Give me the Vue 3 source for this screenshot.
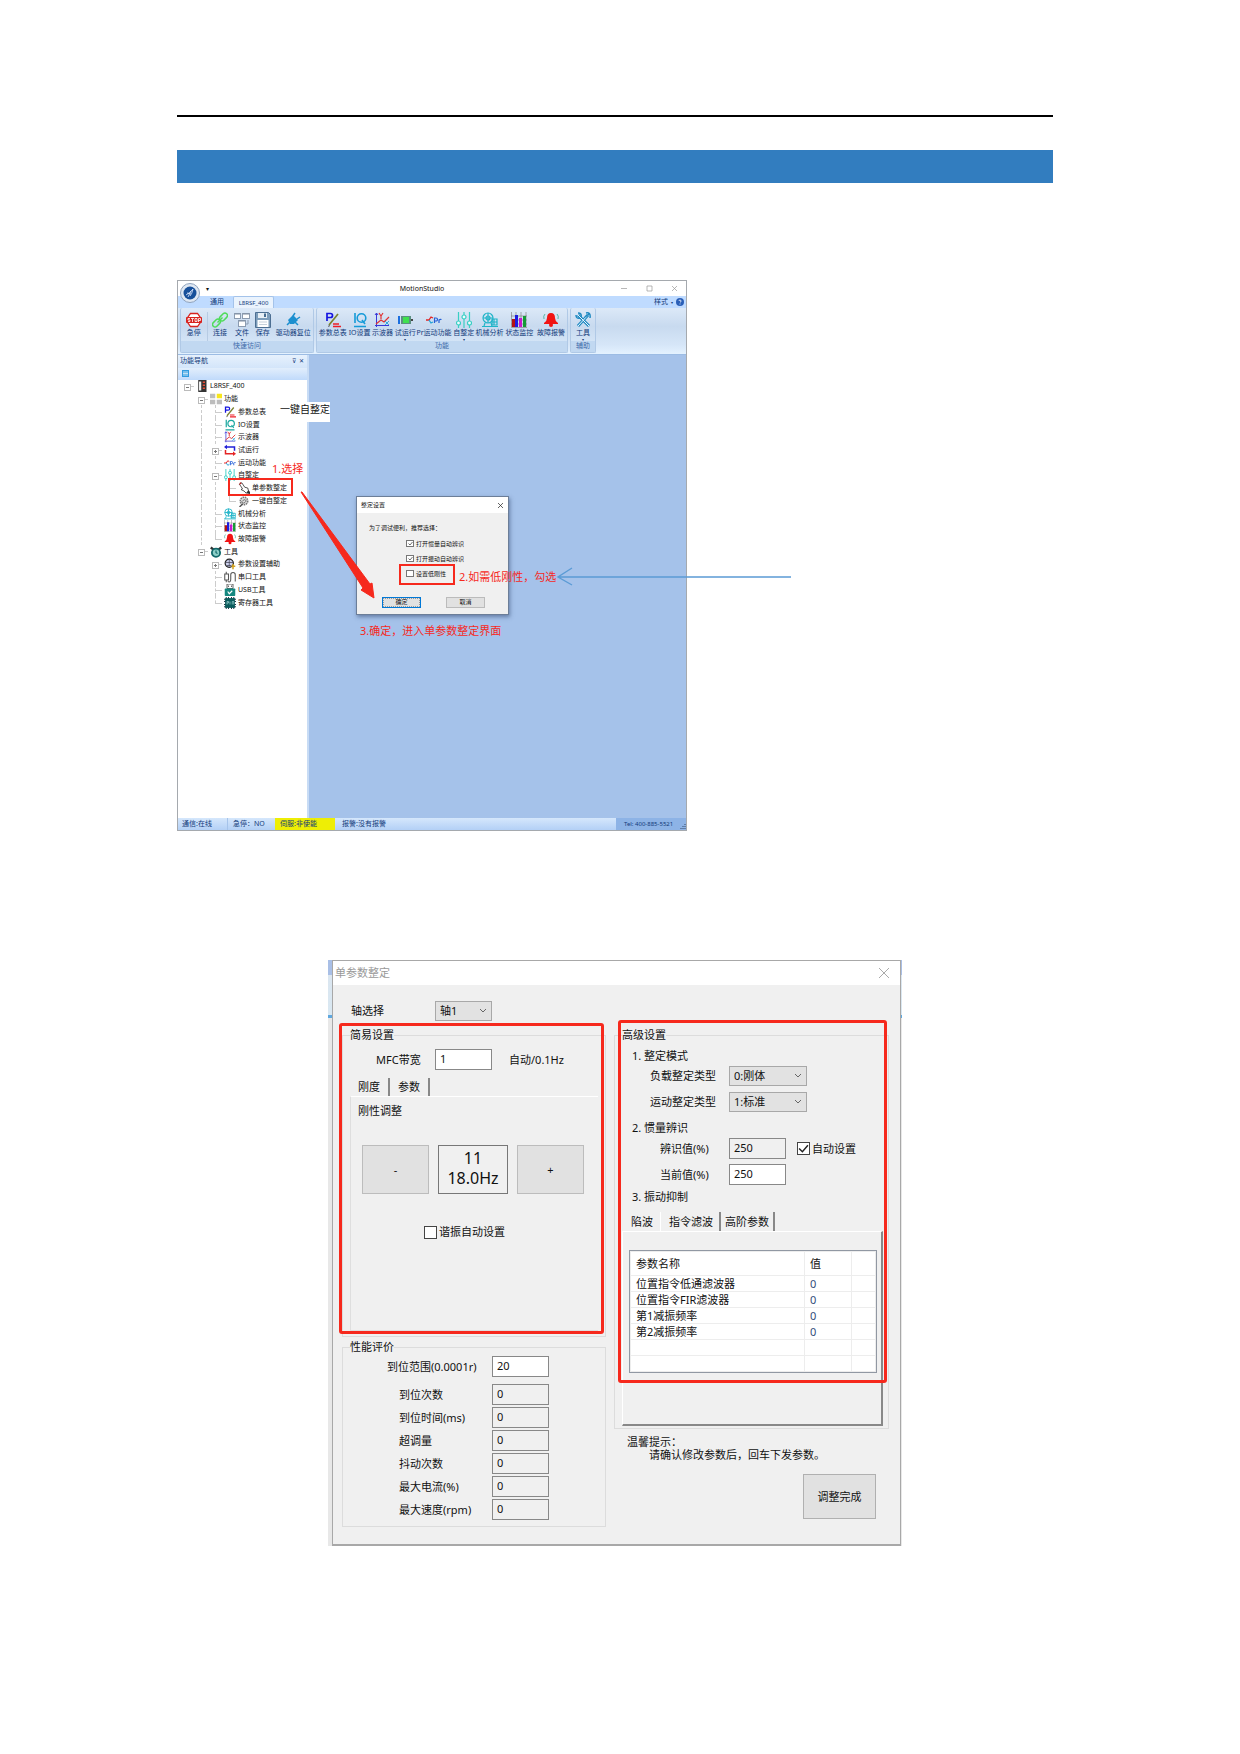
<template>
  <main class="page">
    <!-- Iconos compartidos por la cinta y el árbol -->
    <svg class="sprite" aria-hidden="true">
      <symbol id="stop" viewBox="0 0 16 16">
        <path d="M4.500 1.500h7l3.500 5v3l-3.500 5h-7l-3.500-5v-3z" fill="#fff" stroke="#d8231f" stroke-width="1.300" />
        <rect x="0" y="5" width="16" height="6" rx="1" fill="#d8231f" />
        <path d="M4 6.500H2v1.500h2v1.500H2M5 6.500h3M6.500 6.500v3.500M9 6.500h2v3H9zM12.500 10V6.500h2v2h-2" fill="none" stroke="#fff" stroke-width=".8" />
      </symbol>
      <symbol id="link" viewBox="0 0 16 16">
        <g fill="none" stroke="#4fdc5a" stroke-width="1.500">
          <rect x="7" y="2.500" width="9" height="5" rx="2.500" transform="rotate(-45 11.500 5)" />
          <rect x="0" y="8.500" width="9" height="5" rx="2.500" transform="rotate(-45 4.500 11)" />
          <path d="M5.500 10.500l5-5" />
        </g>
      </symbol>
      <symbol id="files" viewBox="0 0 16 16">
        <g fill="#fff" stroke="#8b9bb0">
          <rect x=".5" y="1.500" width="6" height="5" /><rect x="8.500" y="1.500" width="7" height="5" />
          <rect x="4.500" y="8.500" width="7" height="6" />
        </g>
        <path d="M1 2h5M9 2h6M5 9h6" stroke="#7f8da1" />
        <path d="M12 12h2V8" fill="none" stroke="#8b9bb0" />
      </symbol>
      <symbol id="save" viewBox="0 0 16 16">
        <path d="M.5.5h13l2 2v13H.500z" fill="#7d9dbb" stroke="#4d6f92" />
        <rect x="3" y="1" width="9" height="5" fill="#e6eef5" /><rect x="9" y="1.500" width="2" height="3.500" fill="#456b90" />
        <rect x="2.500" y="8" width="11" height="7" fill="#fff" />
        <path d="M4 10h8M4 12.500h8" stroke="#c5d0db" />
      </symbol>
      <symbol id="plug" viewBox="0 0 16 16">
        <path d="M3 8l5-5 5 5-4 4-4 0z" fill="#1c8fcf" />
        <path d="M8 4l2-3M12 7l3-2M5 10l-3 3M10 10l3 3" stroke="#1c8fcf" stroke-width="1.500" />
      </symbol>
      <symbol id="params" viewBox="0 0 16 16">
        <path d="M2 9V1.500h3.500a2 2 0 010 4H2" fill="none" stroke="#1515e0" stroke-width="1.700" />
        <path d="M13 2L4 13" stroke="#7c8230" stroke-width="1.700" /><path d="M4 13l-1 2 2-1z" fill="#333" />
        <path d="M8 12h6M8 14.500h8" stroke="#ee1c25" stroke-width="1.400" />
      </symbol>
      <symbol id="io" viewBox="0 0 16 16">
        <path d="M3 1v10M2 14.500h12" stroke="currentColor" stroke-width="1.600" />
        <circle cx="9.500" cy="6" r="4.300" fill="none" stroke="currentColor" stroke-width="1.600" />
        <path d="M10 8l3 4" stroke="currentColor" stroke-width="1.500" />
      </symbol>
      <symbol id="scope" viewBox="0 0 16 16">
        <path d="M2.500 15V1M1 3l1.500-2L4 3M1 13.500h14" fill="none" stroke="#3939d8" />
        <path d="M5 1l2 3 2-3M7 4v3M2 12l5-4 3 2 5-5" fill="none" stroke="#e03232" stroke-width="1.200" />
        <path d="M11 9l4 4M15 9l-4 4" stroke="#31a8de" />
      </symbol>
      <symbol id="motor" viewBox="0 0 16 16">
        <path d="M2 4v8" stroke="#1b6fe0" stroke-width="2" /><path d="M14 8h2" stroke="#444" stroke-width="2" />
        <rect x="4" y="4" width="10" height="8" fill="#5b8f80" /><path d="M6 5h6v6H6z" fill="#3fe04f" />
      </symbol>
      <symbol id="loop" viewBox="0 0 16 16">
        <path d="M14 9V4H3" fill="none" stroke="#2020d8" stroke-width="2" /><path d="M4 1v6L0 4z" fill="#2020d8" />
        <path d="M2 8v5h11" fill="none" stroke="#e42424" stroke-width="2" /><path d="M12 10v6l4-3z" fill="#e42424" />
      </symbol>
      <symbol id="pr" viewBox="0 0 16 16">
        <path d="M0 8h3l2-3 2 1" fill="none" stroke="#e42424" stroke-width="1.300" /><path d="M3 8l2 3 2-1" fill="none" stroke="#28a5d8" stroke-width="1.300" />
        <path d="M8.500 11V6h1.500a1.400 1.400 0 010 3H8.500M13 11V8q1-1 2.500-.5" fill="none" stroke="#2560d8" stroke-width="1.200" />
      </symbol>
      <symbol id="sliders" viewBox="0 0 16 16">
        <path d="M2.500 0v16M8 0v16M13.500 0v16" stroke="#39cfc4" stroke-width="1.200" />
        <g fill="#eefcff" stroke="#39cfc4" stroke-width="1.200"><circle cx="2.500" cy="11" r="2" /><circle cx="8" cy="5" r="2" /><circle cx="13.500" cy="11" r="2" /></g>
      </symbol>
      <symbol id="machine" viewBox="0 0 16 16">
        <g fill="none" stroke="#20b4c8" stroke-width="1.200">
          <circle cx="6" cy="6" r="5" /><circle cx="6" cy="6" r="2" /><path d="M6 1v10M1 6h10M3 11l-1 3M9 11l1 3M0 14.500h16" />
          <path d="M10 7h5v6h-5zM12 7v6M10 10h5" />
        </g>
      </symbol>
      <symbol id="bars" viewBox="0 0 16 16">
        <path d="M.5 0v15.500H16M0 4h16M0 8h16M0 12h16M5 0v15M10 0v15M15 0v15" fill="none" stroke="#777" stroke-width=".6" />
        <rect x="1" y="7" width="3" height="8" fill="#b31212" /><rect x="4" y="3" width="3" height="12" fill="#1c1ce0" />
        <rect x="8" y="6" width="3" height="9" fill="#ca15ce" /><rect x="12" y="4" width="3" height="11" fill="#149b36" />
      </symbol>
      <symbol id="bell" viewBox="0 0 16 16">
        <path d="M8 1q4 0 4 5 0 3 3 5v1H1v-1q3-2 3-5 0-5 4-5z" fill="#f11313" /><circle cx="8" cy="13" r="2" fill="#f11313" />
        <path d="M2 2Q0 4 1 7M14 2q2 2 1 5" fill="none" stroke="#56b5a5" />
      </symbol>
      <symbol id="tools" viewBox="0 0 16 16">
        <path d="M3 3l11 11M13 3L3 14" stroke="#208ac2" stroke-width="3" /><path d="M3 3l11 11M13 3L3 14" stroke="#e7f5ff" />
        <path d="M1 3q0 4 4 3M3 1q4 0 3 4M11 1q5-1 4 5M10 5l4-3" fill="none" stroke="#208ac2" stroke-width="1.500" />
      </symbol>
      <symbol id="drive" viewBox="0 0 16 16">
        <path d="M3 0h11v16H3z" fill="#333" /><path d="M4 2h3v12H4z" fill="#eee" /><path d="M9 3h3M9 7h3M9 11h3" stroke="#e94b35" stroke-width="2" />
      </symbol>
      <symbol id="blocks" viewBox="0 0 16 16">
        <path d="M0 1h7v6H0zM0 9h7v6H0zM9 9h7v6H9z" fill="#bdbdbd" /><path d="M9 1h7v6H9z" fill="#f8e61c" />
      </symbol>
      <symbol id="hand" viewBox="0 0 16 16">
        <path d="M2 3l3-2 4 6 4 1 1 4-3 3-3-3-4-2 2-1z" fill="#fff" stroke="#222" /><path d="M11 15l3-4 2 2v3z" fill="#333" /><path d="M1 4l2-4 2 2z" fill="#b32626" />
      </symbol>
      <symbol id="gear" viewBox="0 0 16 16">
        <circle cx="8" cy="8" r="5" fill="#ddd" stroke="#777" stroke-width="2" stroke-dasharray="2 1" /><path d="M5 9q4-5 6-1-4 5-6 1z" fill="none" stroke="#555" /><path d="M2 16l4-4" stroke="#555" stroke-width="2" />
      </symbol>
      <symbol id="clock" viewBox="0 0 16 16">
        <path d="M1 2l4 3M15 2l-4 3" stroke="#333" stroke-width="3" /><circle cx="8" cy="9" r="5.500" fill="#8ccfc8" stroke="#12696b" stroke-width="2.400" /><path d="M8 6v3l2 1" fill="none" stroke="#12696b" stroke-width="1.500" />
      </symbol>
      <symbol id="wizard" viewBox="0 0 16 16">
        <circle cx="7" cy="7" r="5.500" fill="#cdd2ee" stroke="#222" stroke-width="1.600" /><path d="M2 6h10M4 10h6M7 2v9" stroke="#445" /><path d="M12 8v7M10 11h5" stroke="#d4a11c" stroke-width="2" />
      </symbol>
      <symbol id="serial" viewBox="0 0 16 16">
        <path d="M1 4h5v8H1zM3 1v3M3 12v3M5 14q4 2 4-3V5q0-3 3-3t3 3v9" fill="none" stroke="#555" stroke-width="1.400" />
      </symbol>
      <symbol id="usb" viewBox="0 0 16 16">
        <path d="M4 0h8v6H4z" fill="#fff" stroke="#333" /><path d="M6 2v2M10 2v2" stroke="#333" /><rect x="1" y="6" width="14" height="10" rx="1" fill="#14877f" /><path d="M5 10l2 3 4-4" fill="none" stroke="#fff" stroke-width="1.500" />
      </symbol>
      <symbol id="chip" viewBox="0 0 16 16">
        <path d="M3 0v16M6 0v16M10 0v16M13 0v16M0 3h16M0 6h16M0 10h16M0 13h16" stroke="#123" stroke-width="1.200" /><rect x="1.500" y="1.500" width="13" height="13" fill="#0b5c5c" /><path d="M4 10V6h2v2H4M8 10V6M11 10V6h2v4" fill="none" stroke="#9cc" />
      </symbol>
    </svg>

    <hr class="rule" />
    <div class="band"></div>

    <section class="studio">
      <header class="title-bar">
        <span class="quick">▾</span>
        <span class="title">MotionStudio</span>
        <span class="win-buttons">
          <button aria-label="最小化"><svg viewBox="0 0 7 7"><path d="M0 3.500h6" /></svg></button>
          <button aria-label="最大化"><svg viewBox="0 0 7 7"><path d="M1 1h5v5H1z" /></svg></button>
          <button aria-label="关闭"><svg viewBox="0 0 7 7"><path d="M1 1l5 5M6 1L1 6" /></svg></button>
        </span>
      </header>
      <svg class="orb" viewBox="0 0 20 20">
        <circle cx="10" cy="10" r="9.500" fill="#dfe8f3" stroke="#8fa3bd" />
        <circle cx="10" cy="10" r="6.500" fill="#17509a" />
        <path d="M6 12q4-2 7-6-1 5-3 7M8 14l3-6M7 10l4 1" fill="none" stroke="#dfeaff" stroke-width=".8" />
      </svg>
      <nav class="ribbon-tabs">
        <button>通用</button>
        <button class="active">L8RSF_400</button>
        <span class="style-menu">样式 <i>▾</i><svg viewBox="0 0 8 8"><circle cx="4" cy="4" r="4" fill="#2a5fb8" /><path d="M3 3q0-1 1-1t1 1-1 1.500M4 5.500v1" fill="none" stroke="#fff" stroke-width=".8" /></svg></span>
      </nav>
      <div class="ribbon">
        <div v-for="g in groups" :key="g.name" class="group" :class="g.kind">
          <div class="tools-row">
            <button v-for="t in g.tools" :key="t.label">
              <svg><use :href="'#' + t.icon" /></svg>
              <span>{{ t.label }}</span>
              <i v-if="t.menu">▾</i>
            </button>
          </div>
          <div class="caption">{{ g.name }}</div>
        </div>
      </div>
      <div class="studio-body">
        <aside>
          <div class="side-head"><span>功能导航</span><span class="pins"><span>⊽</span><span>✕</span></span></div>
          <div class="side-tools"><svg viewBox="0 0 7 7"><path d="M0 0h7v7H0z" fill="#2f9be0" /><path d="M1 2h5M1 3.500h5M1 5h5" stroke="#fff" stroke-width=".7" /></svg></div>
          <ul class="tree">
            <li v-for="n in nodes" :key="n.label">
              <span v-for="(c, i) in n.guides" :key="i" class="guide" :class="guideClass[c]"></span>
              <svg><use :href="'#' + n.icon" /></svg>
              <span>{{ n.label }}</span>
            </li>
          </ul>
        </aside>
        <div class="workspace"></div>
      </div>
      <footer class="status">
        <span class="s1">通信:在线</span>
        <span class="s2">急停：NO</span>
        <span class="s3">伺服:非使能</span>
        <span class="s4">报警:没有报警</span>
        <span class="s5">Tel: 400-885-5521<svg viewBox="0 0 6 6"><path d="M4 0h2v1H4zM2 2h4v1H2zM0 4h6v1H0z" fill="#5f7ea8" /></svg></span>
      </footer>

      <div class="prompt">
        <header>整定设置<button aria-label="关闭"><svg viewBox="0 0 7 7"><path d="M1 1l5 5M6 1L1 6" /></svg></button></header>
        <p>为了调试便利，推荐选择：</p>
        <label v-for="o in options" :key="o.label"><input v-model="o.on" type="checkbox" />{{ o.label }}</label>
        <div class="prompt-buttons"><button class="ok">确定</button><button>取消</button></div>
      </div>

      <span class="patch">一键自整定</span>
      <span class="note n1">1.选择</span>
      <span class="note n2">2.如需低刚性，勾选</span>
      <span class="note n3">3.确定，进入单参数整定界面</span>
      <span class="mark m1"></span>
      <span class="mark m2"></span>
      <svg class="arrows" viewBox="0 0 620 340">
        <path d="M123 212l1 0 68 92 2-1 2 15-13-8 2-2z" fill="#f6291d" stroke="#f6291d" />
        <path d="M380 297h233M394 288l-14 9 14 8" fill="none" stroke="#5b9bd5" stroke-width="1.400" />
      </svg>
    </section>

    <section class="tuning-shot">
      <div class="tuning">
        <header>单参数整定<button aria-label="关闭"><svg viewBox="0 0 10 10"><path d="M0 0l10 10M10 0L0 10" /></svg></button></header>
        <div class="columns">
          <div class="left">
            <div class="axis">
              <label for="axis">轴选择</label>
              <select id="axis" v-model="axis"><option>轴1</option></select>
            </div>
            <fieldset>
              <legend>简易设置</legend>
              <div class="mfc">
                <label for="mfc">MFC带宽</label>
                <input id="mfc" v-model="mfc" />
                <span>自动/0.1Hz</span>
              </div>
              <div class="tabs"><button class="on">刚度</button><button>参数</button></div>
              <div class="stiff">
                <div>刚性调整</div>
                <div class="stepper">
                  <button @click="level--">-</button>
                  <output>{{ level }}<br />18.0Hz</output>
                  <button @click="level++">+</button>
                </div>
                <label class="check"><input v-model="autoRes" type="checkbox" />谐振自动设置</label>
              </div>
            </fieldset>
            <fieldset class="perf">
              <legend>性能评价</legend>
              <div v-for="(r, i) in results" :key="r.label" class="perf-row">
                <label :for="'r' + i">{{ r.label }}</label>
                <input :id="'r' + i" v-model="r.value" :readonly="i > 0" />
              </div>
            </fieldset>
          </div>

          <div class="right">
            <fieldset>
              <legend>高级设置</legend>
              <h3>1. 整定模式</h3>
              <div class="adv-row">
                <label for="load">负载整定类型</label>
                <select id="load"><option>0:刚体</option></select>
              </div>
              <div class="adv-row">
                <label for="motion">运动整定类型</label>
                <select id="motion"><option>1:标准</option></select>
              </div>
              <h3>2. 惯量辨识</h3>
              <div class="adv-row value">
                <label for="ident">辨识值(%)</label>
                <input id="ident" value="250" readonly />
                <label class="check"><input v-model="autoSet" type="checkbox" />自动设置</label>
              </div>
              <div class="adv-row value">
                <label for="current">当前值(%)</label>
                <input id="current" value="250" />
              </div>
              <h3>3. 振动抑制</h3>
              <div class="tabs"><button>陷波</button><button class="on">指令滤波</button><button>高阶参数</button></div>
              <div class="filter-panel">
                <table>
                  <thead><tr><th>参数名称</th><th>值</th><th></th></tr></thead>
                  <tbody>
                    <tr v-for="(f, i) in filters" :key="i"><td>{{ f }}</td><td>{{ f ? 0 : '' }}</td><td></td></tr>
                  </tbody>
                </table>
              </div>
            </fieldset>
            <p class="tip">温馨提示：<br /><span>请确认修改参数后，回车下发参数。</span></p>
            <button class="done">调整完成</button>
          </div>
        </div>
        <span class="mark big-left"></span>
        <span class="mark big-right"></span>
      </div>
    </section>
  </main>
</template>

<script setup>
import { ref } from 'vue';

const axis = ref('轴1');
const mfc = ref('1');
const level = ref(11);
const autoRes = ref(false);
const autoSet = ref(true);

const groups = [
  {
    name: '快速访问',
    kind: 'access',
    tools: [
      { label: '急停', icon: 'stop' },
      { label: '连接', icon: 'link' },
      { label: '文件', icon: 'files', menu: true },
      { label: '保存', icon: 'save' },
      { label: '驱动器复位', icon: 'plug' },
    ],
  },
  {
    name: '功能',
    kind: 'functions',
    tools: [
      { label: '参数总表', icon: 'params' },
      { label: 'IO设置', icon: 'io' },
      { label: '示波器', icon: 'scope' },
      { label: '试运行', icon: 'motor', menu: true },
      { label: 'Pr运动功能', icon: 'pr' },
      { label: '自整定', icon: 'sliders', menu: true },
      { label: '机械分析', icon: 'machine' },
      { label: '状态监控', icon: 'bars' },
      { label: '故障报警', icon: 'bell' },
    ],
  },
  { name: '辅助', kind: 'help', tools: [{ label: '工具', icon: 'tools', menu: true }] },
];

// Cada carácter es una celda de 14px a la izquierda del icono
const guideClass = { '|': 'vert', T: 'tee', L: 'end', '-': 'box', '+': 'box plus' };

const nodes = [
  { guides: '-', icon: 'drive', label: 'L8RSF_400' },
  { guides: ' -', icon: 'blocks', label: '功能' },
  { guides: ' |T', icon: 'params', label: '参数总表' },
  { guides: ' |T', icon: 'io', label: 'IO设置' },
  { guides: ' |T', icon: 'scope', label: '示波器' },
  { guides: ' |+', icon: 'loop', label: '试运行' },
  { guides: ' |T', icon: 'pr', label: '运动功能' },
  { guides: ' |-', icon: 'sliders', label: '自整定' },
  { guides: ' ||T', icon: 'hand', label: '单参数整定' },
  { guides: ' ||L', icon: 'gear', label: '一键自整定' },
  { guides: ' |T', icon: 'machine', label: '机械分析' },
  { guides: ' |T', icon: 'bars', label: '状态监控' },
  { guides: ' |L', icon: 'bell', label: '故障报警' },
  { guides: ' -', icon: 'clock', label: '工具' },
  { guides: '  +', icon: 'wizard', label: '参数设置辅助' },
  { guides: '  T', icon: 'serial', label: '串口工具' },
  { guides: '  T', icon: 'usb', label: 'USB工具' },
  { guides: '  L', icon: 'chip', label: '寄存器工具' },
];

const options = ref([
  { label: '打开惯量自动辨识', on: true },
  { label: '打开振动自动辨识', on: true },
  { label: '设置低刚性', on: false },
]);

const results = ref([
  { label: '到位范围(0.0001r)', value: '20' },
  { label: '到位次数', value: '0' },
  { label: '到位时间(ms)', value: '0' },
  { label: '超调量', value: '0' },
  { label: '抖动次数', value: '0' },
  { label: '最大电流(%)', value: '0' },
  { label: '最大速度(rpm)', value: '0' },
]);

const filters = ['位置指令低通滤波器', '位置指令FIR滤波器', '第1减振频率', '第2减振频率', '', ''];
</script>

<style>
  body {
    margin: 0;
    background: #fff;
  }
</style>

<style scoped>
  .page {
    padding: 115px 187px 160px 177px;
    font-family: "Noto Sans", "Noto Sans CJK SC", sans-serif;
    color: #111;
  }

  .page * {
    box-sizing: border-box;
  }

  button, input, select {
    font: inherit;
    color: inherit;
    margin: 0;
    padding: 0;
    border: 0;
    border-radius: 0;
    background: none;
  }

  .sprite {
    display: none;
  }

  .rule {
    margin: 0;
    border: 0;
    height: 2px;
    background: #000;
  }

  .band {
    margin-top: 33px;
    height: 33px;
    background: #327dbf;
  }

  /* Ventana MotionStudio */
  .studio {
    position: relative;
    margin-top: 97px;
    width: 510px;
    max-width: 100%;
    border: 1px solid #a5a9ae;
    font-size: 7px;
    line-height: 10px;
    white-space: nowrap;
    color: #123a7a;
  }

  .title-bar {
    display: grid;
    grid-template-columns: 1fr auto 1fr;
    align-items: center;
    height: 15px;
    color: #111;
  }

  .title {
    padding-right: 20px;
  }

  .quick {
    padding-left: 28px;
    font-size: 6px;
  }

  .win-buttons {
    display: flex;
    justify-content: flex-end;
    gap: 18px;
    padding-right: 8px;
  }

  .win-buttons button, .prompt header button {
    width: 7px;
    height: 7px;
    line-height: 0;
  }

  .win-buttons svg, .prompt header svg {
    width: 7px;
    height: 7px;
    fill: none;
    stroke: #999;
    stroke-width: 0.700;
  }

  .orb {
    position: absolute;
    left: 2px;
    top: 2px;
    width: 20px;
    height: 20px;
  }

  .ribbon-tabs {
    display: flex;
    height: 12px;
    padding-left: 23px;
    background: #bfdbff;
  }

  .ribbon-tabs button {
    width: 32px;
  }

  .ribbon-tabs .active {
    width: 41px;
    font-size: 6px;
    background: #eaf3fd;
    border: 1px solid #a4c3ea;
    border-bottom: 0;
    border-radius: 2px 2px 0 0;
  }

  .style-menu {
    display: flex;
    gap: 3px;
    align-items: center;
    margin-left: auto;
    padding-right: 2px;
  }

  .style-menu svg {
    width: 8px;
    height: 8px;
  }

  i {
    font-size: 4px;
    line-height: 5px;
    font-style: normal;
  }

  .ribbon {
    display: grid;
    grid-template-columns: 134fr 252fr 26fr 88fr;
    column-gap: 2px;
    height: 47px;
    padding: 0 0 1px 2px;
    background: linear-gradient(#dce9f8, #c8daef 40%, #d6e6f8 80%, #e4f2ff);
    border-bottom: 1px solid #9cbce4;
  }

  .group {
    display: flex;
    flex-direction: column;
    min-width: 0;
    border: 1px solid #b0c9e6;
    border-top: 0;
    border-radius: 2px;
  }

  .tools-row {
    display: grid;
    flex: 1;
    padding-top: 4px;
  }

  .access .tools-row {
    grid-template-columns: 27fr 25fr 20fr 22fr 40fr;
  }

  .functions .tools-row {
    grid-template-columns: 32fr 22fr 24fr 22fr 36fr 24fr 28fr 32fr 32fr;
  }

  .tools-row button {
    display: flex;
    flex-direction: column;
    align-items: center;
    min-width: 0;
  }

  .access button:first-child {
    border-right: 1px solid #b7cbe3;
  }

  .tools-row svg {
    width: 16px;
    height: 16px;
    color: #159ad8;
  }

  .tools-row i {
    line-height: 3px;
  }

  .caption {
    height: 11px;
    background: #c1d8f1;
    color: #3e6aaa;
    text-align: center;
  }

  .studio-body {
    display: grid;
    grid-template-columns: 131fr 377fr;
    height: 463px;
    background: #a5c2ea;
  }

  aside {
    background: #fff;
    border-right: 2px solid #c8dcf5;
  }

  .side-head {
    display: flex;
    justify-content: space-between;
    height: 13px;
    padding: 1px 3px 0 2px;
    background: linear-gradient(#e7f1fd, #d3e5fa);
  }

  .pins {
    display: flex;
    gap: 3px;
    font-size: 6px;
  }

  .side-tools {
    height: 12px;
    padding: 2px 4px;
    line-height: 0;
    background: linear-gradient(#e2eefc, #c0dafb);
  }

  .side-tools svg {
    width: 7px;
    height: 7px;
  }

  .tree {
    display: grid;
    grid-auto-rows: 1fr;
    height: 229px;
    margin: 0;
    padding: 0 0 0 2px;
    list-style: none;
    color: #111;
  }

  .tree li {
    display: flex;
    align-items: center;
    min-height: 0;
  }

  .tree svg {
    width: 12px;
    height: 12px;
    margin: 0 2px;
    color: #1aa79f;
  }

  .guide {
    position: relative;
    width: 14px;
    height: 100%;
  }

  .vert::before, .tee::before, .end::before {
    content: "";
    position: absolute;
    left: 7px;
    top: 0;
    bottom: 0;
    border-left: 1px dashed #ccc;
  }

  .end::before {
    bottom: 50%;
  }

  .tee::after, .end::after {
    content: "";
    position: absolute;
    left: 7px;
    right: 0;
    top: 50%;
    border-top: 1px solid #ccc;
  }

  .box::before {
    content: "";
    position: absolute;
    z-index: 1;
    left: 4px;
    top: 4px;
    width: 5px;
    height: 5px;
    border: 1px solid #bbb;
    background: linear-gradient(#777, #777) center / 3px 1px no-repeat #fff;
  }

  .plus::before {
    background: linear-gradient(#777, #777) center / 3px 1px no-repeat, linear-gradient(#777, #777) center / 1px 3px no-repeat #fff;
  }

  .box::after {
    content: "";
    position: absolute;
    left: 9px;
    right: 0;
    top: 6px;
    border-top: 1px solid #ccc;
  }

  .status {
    display: flex;
    height: 12px;
    line-height: 12px;
    background: linear-gradient(#d5e7fc, #b3d0f6);
  }

  .s1 {
    width: 50px;
    padding-left: 4px;
    border-right: 1px solid #a5c3ea;
  }

  .s2 {
    width: 47px;
    padding-left: 5px;
  }

  .s3 {
    width: 60px;
    padding-left: 5px;
    background: #eeee05;
  }

  .s4 {
    flex: 1;
    padding-left: 7px;
  }

  .s5 {
    display: flex;
    justify-content: space-between;
    width: 70px;
    padding-left: 8px;
    font-size: 6px;
    background: #8db3e6;
  }

  .s5 svg {
    width: 6px;
    height: 6px;
    align-self: flex-end;
  }

  /* Diálogo flotante sobre el escritorio */
  .prompt {
    position: absolute;
    left: 178px;
    top: 215px;
    width: 153px;
    padding-bottom: 6px;
    border: 1px solid #6c7e98;
    background: #f0f0f0;
    box-shadow: 1px 2px 4px rgba(40, 60, 100, 0.5);
    font-size: 6px;
    color: #111;
  }

  .prompt header {
    display: flex;
    align-items: center;
    justify-content: space-between;
    height: 16px;
    padding: 0 4px;
    background: #fff;
  }

  .prompt header svg {
    stroke: #222;
  }

  .prompt p {
    margin: 10px 0 3px 12px;
  }

  .prompt label {
    display: flex;
    align-items: center;
    gap: 2px;
    height: 15px;
    padding-left: 49px;
  }

  .prompt input {
    width: 8px;
    height: 7px;
  }

  input[type="checkbox"] {
    appearance: none;
    border: 1px solid #444;
    background: #fff;
  }

  .prompt input[type="checkbox"] {
    border-color: #777;
  }

  input[type="checkbox"]:checked {
    background: #fff url("data:image/svg+xml,%3Csvg xmlns='http://www.w3.org/2000/svg' viewBox='0 0 10 10'%3E%3Cpath d='M1 5l3 3 5-6' fill='none' stroke='%23222' stroke-width='1.300'/%3E%3C/svg%3E") center / contain no-repeat;
  }

  .prompt-buttons {
    display: flex;
    gap: 25px;
    margin-top: 16px;
    padding-left: 25px;
  }

  .prompt-buttons button {
    width: 39px;
    height: 11px;
    line-height: 9px;
    border: 1px solid #bbb;
    background: #e1e1e1;
  }

  .prompt-buttons .ok {
    border: 1px solid #0078d7;
    outline: 1px dotted #999;
    outline-offset: -2px;
  }

  .patch {
    position: absolute;
    left: 101px;
    top: 121px;
    height: 20px;
    padding-left: 1px;
    line-height: 14px;
    font-size: 10px;
    background: #fff;
    color: #111;
  }

  .note {
    position: absolute;
    font-size: 11px;
    line-height: 14px;
    color: #f6291d;
  }

  .n1 {
    left: 94px;
    top: 181px;
  }

  .n2 {
    left: 281px;
    top: 289px;
  }

  .n3 {
    left: 182px;
    top: 343px;
  }

  .mark {
    position: absolute;
    border: 2px solid #f6291d;
    pointer-events: none;
  }

  .m1 {
    left: 50px;
    top: 197px;
    width: 65px;
    height: 18px;
  }

  .m2 {
    left: 221px;
    top: 283px;
    width: 56px;
    height: 21px;
  }

  .arrows {
    position: absolute;
    left: 0;
    top: -1px;
    width: 620px;
    height: 340px;
    pointer-events: none;
  }

  /* Ventana de ajuste */
  .tuning-shot {
    width: 574px;
    max-width: 100%;
    margin: 129px auto 0 151px;
    padding: 0 1px 0 4px;
    background: linear-gradient(#a9bfe6 15px, #dbe6f0 15px, #d9e8f2 55px, #5fa8df 55px, #5fa8df 58px, #e8e8e8 58px);
    font-size: 11px;
    line-height: 14px;
    white-space: nowrap;
  }

  .tuning {
    position: relative;
    border: 1px solid #a8a8a8;
    border-bottom-width: 2px;
    background: #f0f0f0;
  }

  .tuning > header {
    display: flex;
    justify-content: space-between;
    align-items: center;
    height: 24px;
    padding: 0 11px 0 2px;
    background: #fff;
    color: #999;
  }

  .tuning > header button {
    height: 10px;
    line-height: 0;
  }

  .tuning > header svg {
    width: 10px;
    height: 10px;
    stroke: #aaa;
  }

  .columns {
    display: grid;
    grid-template-columns: 264fr 275fr;
    gap: 8px;
    padding: 0 11px 17px 9px;
  }

  fieldset {
    min-width: 0;
    margin: 0;
    padding: 0 7px;
    border: 1px solid #dcdcdc;
  }

  legend {
    padding: 0;
  }

  select {
    appearance: none;
    height: 20px;
    padding: 0 4px;
    border: 1px solid #a8a8a8;
    background: url("data:image/svg+xml,%3Csvg xmlns='http://www.w3.org/2000/svg' viewBox='0 0 8 8'%3E%3Cpath d='M1 2l3 3 3-3' fill='none' stroke='%23666'/%3E%3C/svg%3E") right 4px center / 8px 8px no-repeat #e2e2e2;
  }

  .left input:not([type="checkbox"]), .right input:not([type="checkbox"]) {
    width: 57px;
    height: 21px;
    padding: 0 4px 2px;
    border: 1px solid #888;
    background: #fff;
  }

  .left input[readonly], .right input[readonly] {
    background: #f0f0f0 !important;
  }

  .axis {
    display: grid;
    grid-template-columns: 84px 57px;
    align-items: center;
    margin: 16px 0 7px 9px;
  }

  .mfc {
    display: grid;
    grid-template-columns: 59px 57px auto;
    align-items: center;
    margin: 7px 0 8px 26px;
  }

  .mfc span {
    padding-left: 17px;
  }

  .tabs {
    display: flex;
  }

  .tabs button {
    height: 18px;
    padding: 0 8px;
    border-right: 2px solid #888;
  }

  .stiff {
    padding: 7px 14px 91px 7px;
    border: solid #dedede;
    border-width: 0 0 1px 1px;
    border-top: 1px solid #fff;
  }

  .stepper {
    display: grid;
    grid-template-columns: 67fr 70fr 67fr;
    column-gap: 9px;
    height: 49px;
    margin: 27px 0 31px 4px;
  }

  .stepper button {
    border: 1px solid #bcbcbc;
    background: #e1e1e1;
  }

  .stepper output {
    padding-top: 2px;
    border: 1px solid #777;
    text-align: center;
    font-size: 16px;
    line-height: 20px;
  }

  .check {
    display: flex;
    align-items: center;
    gap: 2px;
  }

  .check input {
    width: 13px;
    height: 13px;
  }

  .stiff .check {
    padding-left: 66px;
  }

  .left > fieldset:nth-of-type(1) {
    padding-bottom: 5px;
  }

  .perf {
    margin-top: 3px;
    padding-top: 2px;
    padding-bottom: 6px;
  }

  .perf-row {
    display: grid;
    grid-template-columns: 142px 57px;
    align-items: center;
    margin-top: 2px;
  }

  .perf-row label {
    padding-left: 49px;
  }

  .perf-row:nth-of-type(1) {
    margin: 0 0 7px;
  }

  .perf-row:nth-of-type(1) label {
    padding-left: 37px;
  }

  .right {
    padding-top: 43px;
  }

  h3 {
    margin: 9px 0 3px 10px;
    font-size: 11px;
    font-weight: 400;
  }

  legend + h3 {
    margin-top: 7px;
  }

  .adv-row {
    display: grid;
    grid-template-columns: 79px 78px;
    align-items: center;
    margin: 0 0 6px 28px;
  }

  .adv-row.value {
    grid-template-columns: 69px 57px auto;
    margin-left: 38px;
    margin-bottom: 5px;
  }

  .value .check {
    padding-left: 11px;
  }

  .value + h3 {
    margin: 3px 0 8px 10px;
  }

  .right .tabs button {
    height: 19px;
    padding: 0 4px;
  }

  .right .tabs button:first-child {
    padding: 0 7px 0 9px;
    border-right: 1px solid #fff;
  }

  .right .tabs .on {
    padding: 0 6px 0 8px;
  }

  .filter-panel {
    margin: 0 -2px 2px 0;
    padding: 19px 5px 52px 7px;
    border: solid;
    border-width: 1px 2px 2px 1px;
    border-color: #fff #888 #888 #fff;
  }

  table {
    width: 100%;
    table-layout: fixed;
    border-collapse: collapse;
    outline: 1px solid #9198a3;
    background: #fff;
  }

  th, td {
    height: 16px;
    padding: 0 5px;
    border: 1px solid #ededed;
    line-height: 14px;
    font-weight: 400;
    text-align: left;
  }

  th {
    height: 24px;
    border-bottom: 0;
  }

  th:nth-child(2) {
    width: 47px;
  }

  th:nth-child(3) {
    width: 24px;
  }

  td:nth-child(2) {
    color: #334d7a;
  }

  .tip {
    margin: 6px 0 13px 13px;
    line-height: 13px;
  }

  .tip span {
    padding-left: 22px;
  }

  .done {
    display: block;
    width: 73px;
    height: 45px;
    margin-left: auto;
    margin-right: 13px;
    border: 1px solid #b0b0b0;
    background: #e1e1e1;
  }

  .big-left, .big-right {
    border-width: 3px;
    border-radius: 3px;
  }

  .big-left {
    left: 6px;
    top: 62px;
    width: 265px;
    height: 311px;
  }

  .big-right {
    left: 285px;
    top: 59px;
    width: 269px;
    height: 363px;
  }
</style>
